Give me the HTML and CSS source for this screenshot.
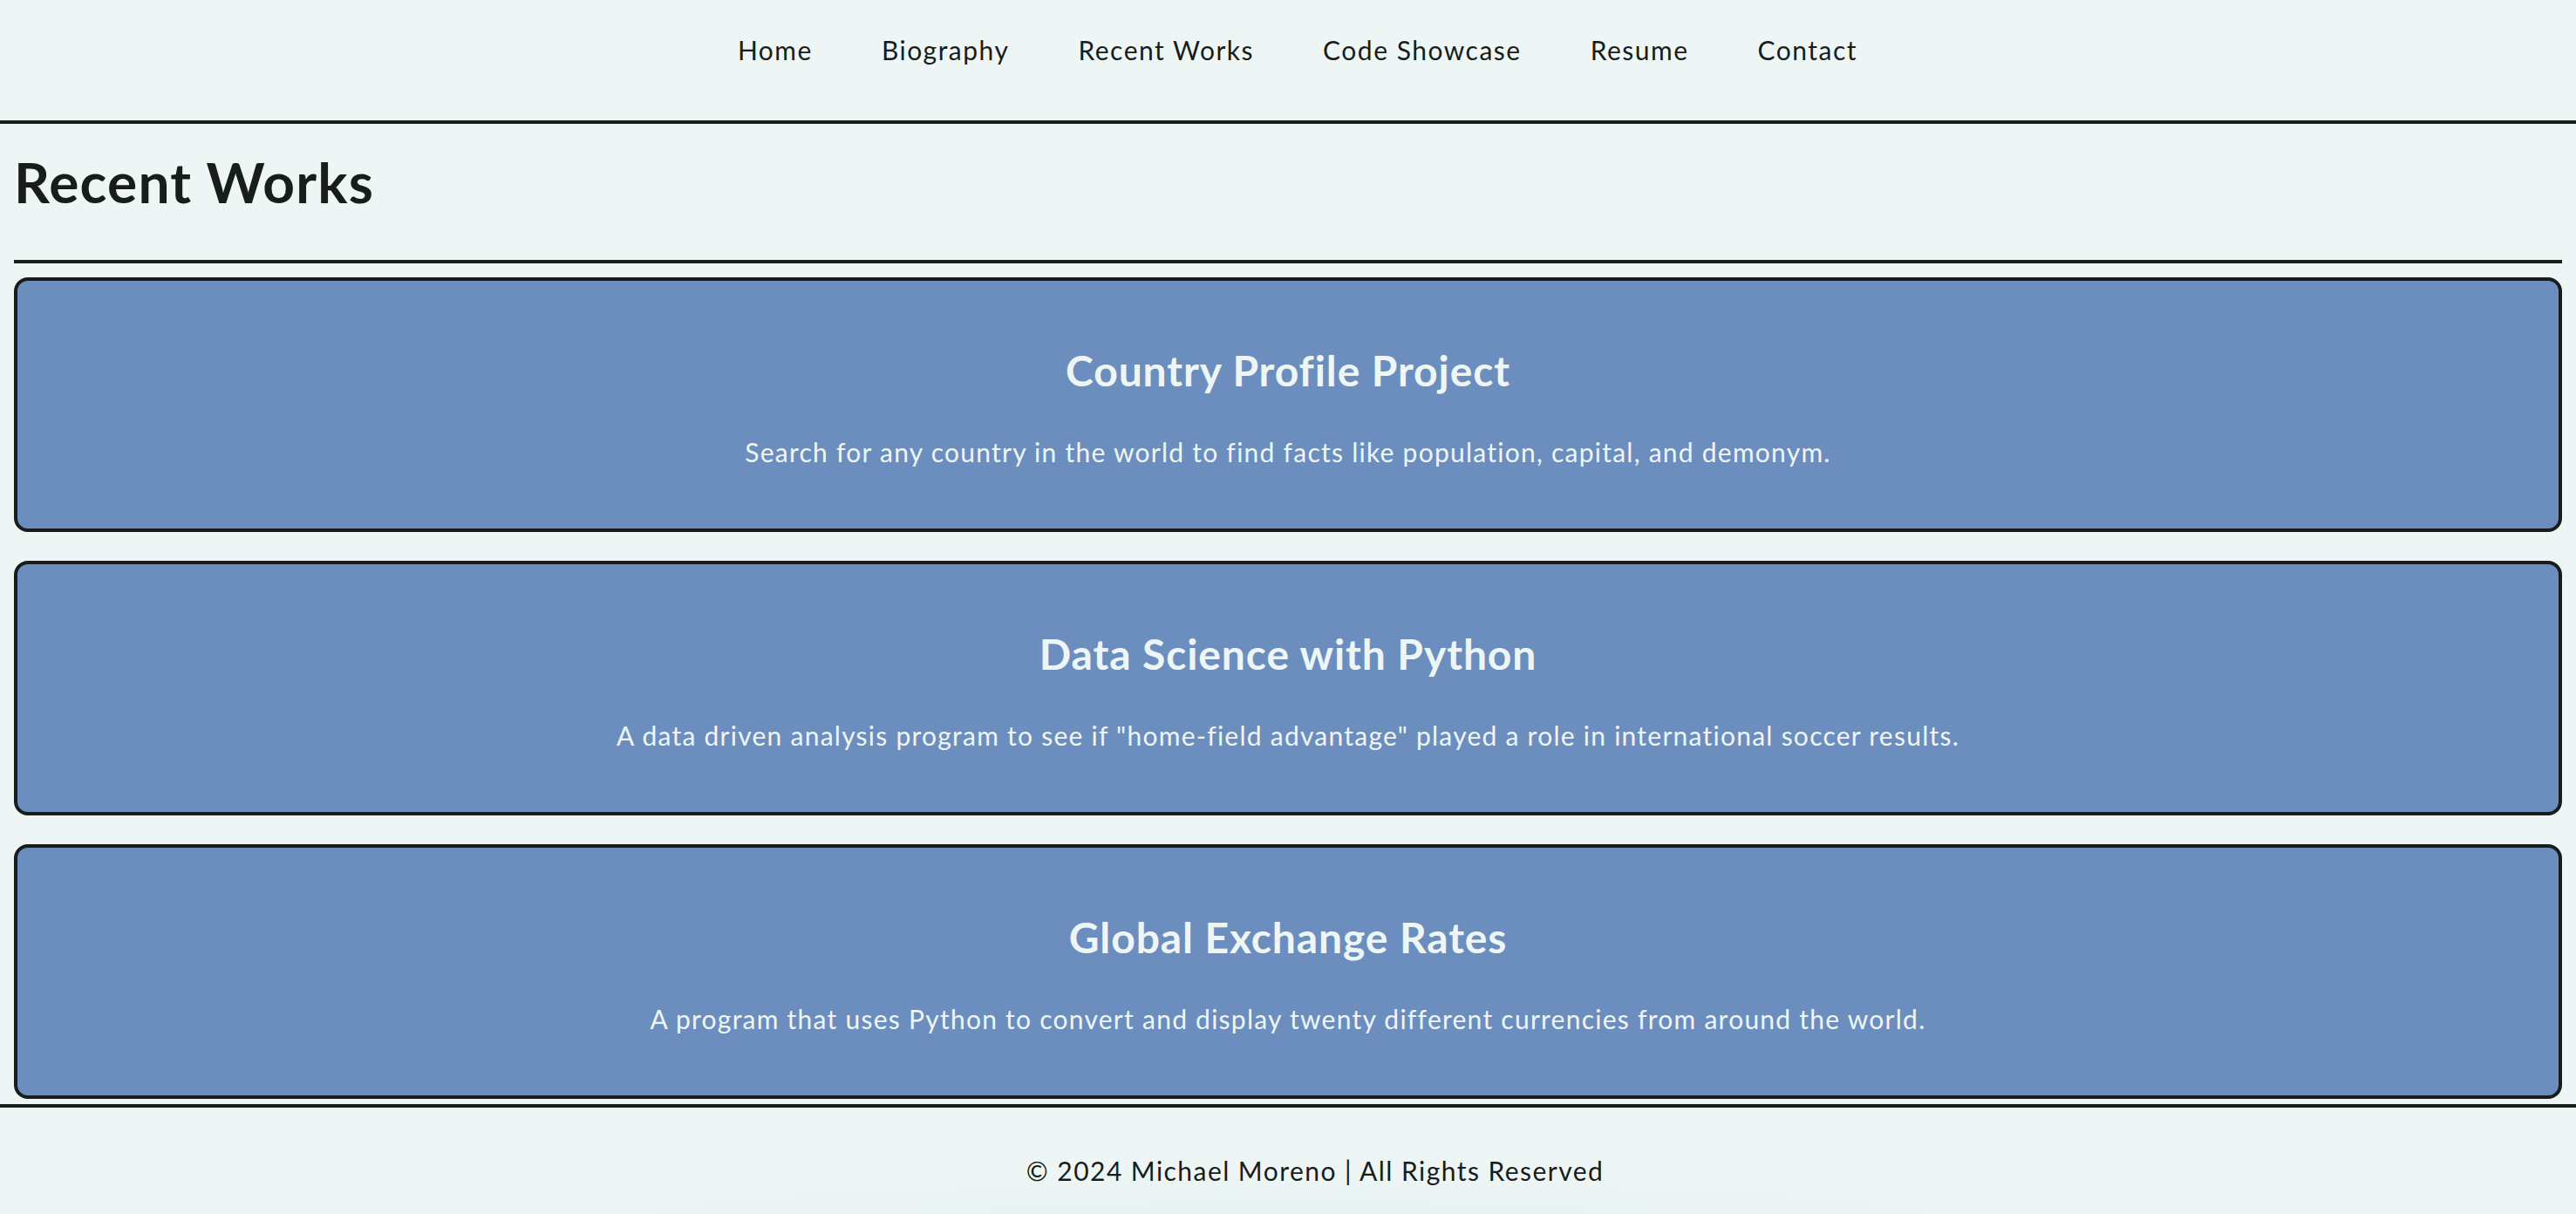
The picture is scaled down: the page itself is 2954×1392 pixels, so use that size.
FILE: index.html
```html
<!DOCTYPE html>
<html lang="en">
<head>
<meta charset="utf-8">
<title>Recent Works | Michael Moreno</title>
<link rel="stylesheet" href="styles.css">
</head>
<body>
<header class="site-header">
  <nav class="nav">
    <ul class="nav-list">
      <li><a class="nav-link" href="#">Home</a></li>
      <li><a class="nav-link" href="#">Biography</a></li>
      <li><a class="nav-link" href="#">Recent Works</a></li>
      <li><a class="nav-link" href="#">Code Showcase</a></li>
      <li><a class="nav-link" href="#">Resume</a></li>
      <li><a class="nav-link" href="#">Contact</a></li>
    </ul>
  </nav>
</header>
<main class="content">
  <h1 class="page-title">Recent Works</h1>
  <hr class="divider">
  <section class="works">
    <article class="work-card">
      <h2 class="work-title">Country Profile Project</h2>
      <p class="work-desc">Search for any country in the world to find facts like population, capital, and demonym.</p>
    </article>
    <article class="work-card">
      <h2 class="work-title">Data Science with Python</h2>
      <p class="work-desc">A data driven analysis program to see if "home-field advantage" played a role in international soccer results.</p>
    </article>
    <article class="work-card">
      <h2 class="work-title">Global Exchange Rates</h2>
      <p class="work-desc">A program that uses Python to convert and display twenty different currencies from around the world.</p>
    </article>
  </section>
</main>
<footer class="site-footer">
  <p class="copyright">&copy; 2024 Michael Moreno | All Rights Reserved</p>
</footer>
</body>
</html>
```
FILE: styles.css
```css
* {
  box-sizing: border-box;
}

body {
  margin: 0;
  background: #edf6f5;
  color: #181d1c;
  font-family: Lato, "Noto Sans", sans-serif;
}

.site-header {
  height: 142px;
  border-bottom: 4px solid #181d1c;
}

.nav-list {
  list-style: none;
  margin: 0;
  padding: 39px 0 0 22px;
  display: flex;
  justify-content: center;
  gap: 79px;
}

.nav-link {
  color: #181d1c;
  text-decoration: none;
  font-size: 30px;
  line-height: 36px;
  letter-spacing: 1.5px;
}

.content {
  padding: 0 16px 6px;
}

.page-title {
  margin: 28px 0 51px;
  font-size: 64px;
  font-weight: 700;
  line-height: 77px;
  letter-spacing: 1.2px;
}

.divider {
  margin: 0 0 16px;
  border: 0;
  border-top: 4px solid #181d1c;
  height: 0;
}

.works {
  display: flex;
  flex-direction: column;
  gap: 33px;
}

.work-card {
  background: #6c8ebf;
  border: 4px solid #181d1c;
  border-radius: 16px;
  padding: 74px 16px 70px;
  text-align: center;
  color: #eef6f5;
}

.work-title {
  margin: 0 0 46px;
  font-size: 48px;
  font-weight: 700;
  line-height: 58px;
  letter-spacing: 0.9px;
}

.work-desc {
  margin: 0;
  font-size: 30px;
  line-height: 36px;
  letter-spacing: 1.25px;
}

.site-footer {
  border-top: 4px solid #181d1c;
  padding: 54px 0 40px 62px;
  text-align: center;
  background: radial-gradient(ellipse 1100px 60px at 50% 100%, #e6f1ef, rgba(237, 246, 245, 0));
}

.copyright {
  margin: 0;
  font-size: 30px;
  line-height: 36px;
  letter-spacing: 1.45px;
}
```
